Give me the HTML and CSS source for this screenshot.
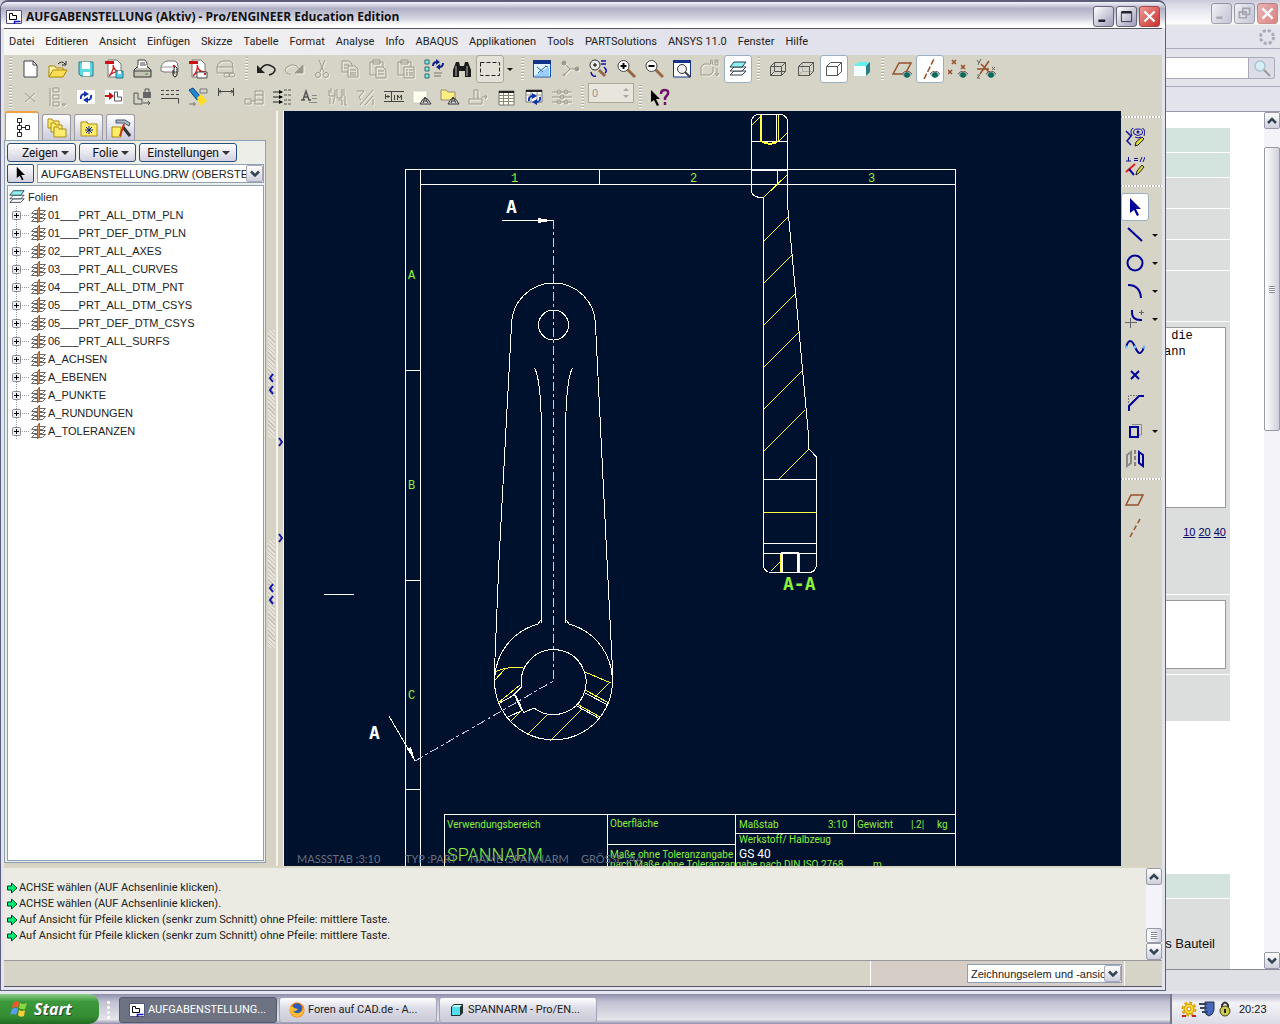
FILE: index.html
```
<!DOCTYPE html>
<html lang="de">
<head>
<meta charset="utf-8">
<title>AUFGABENSTELLUNG (Aktiv) - Pro/ENGINEER Education Edition</title>
<link rel="stylesheet" href="styles.css">
</head>
<body>
<svg class="defs" aria-hidden="true">
  <symbol id="eye" viewBox="0 0 10 7"><path d="M0 4Q5-3 10 4Q5 9 0 4z" fill="#9ab"/><circle cx="5" cy="4" r="2.8" fill="#086b55"/><path d="M0 3Q5-3 10 3" fill="none" stroke="#754"/></symbol>
  <symbol id="layer" viewBox="0 0 18 18"><path d="M1.500 7.500l3-3h11l-3 3zM1.500 11.500l3-3h11l-3 3zM1.500 15.500l3-3h11l-3 3z" fill="#fff" stroke="#666"/><path d="M7.500 4l2-3v13l-2 3z" fill="#d89a62" stroke="#94623a"/></symbol>
  <symbol id="layers" viewBox="0 0 20 20"><path d="M2 16l4-4h12l-4 4z" fill="#fff" stroke="#345"/><path d="M2 12l4-4h12l-4 4z" fill="#fff" stroke="#345"/><path d="M2 8l4-5h12l-4 5z" fill="#8ff0f0" stroke="#245"/></symbol>
  <symbol id="go" viewBox="0 0 12 12"><path d="M1 4h4V1l5.500 5L5 11V8H1z" fill="#0e7" stroke="#042"/></symbol>
  <symbol id="down" viewBox="0 0 10 8"><path d="M1 1.500l4 4 4-4" fill="none" stroke="#345" stroke-width="2.500"/></symbol>
  <symbol id="up" viewBox="0 0 10 8"><path d="M1 6l4-4 4 4" fill="none" stroke="#345" stroke-width="2.500"/></symbol>
  <symbol id="drw" viewBox="0 0 16 16"><path d="M.5 1.500h15v13H.5z" fill="#fff" stroke="#557"/><path d="M3.500 4.500h3v2h4v4h-7z" fill="none" stroke="#000"/><path d="M8.500 15v-2.500h6" fill="none" stroke="#11c" stroke-width="1.500"/></symbol>
  <symbol id="arrow" viewBox="0 0 20 20"><path d="M5 1v15l4-3 3 6 2-1-3-6h5z"/></symbol>
  <symbol id="pdf" viewBox="0 0 20 20"><path d="M4 1h9l4 4v13H4z" fill="#fff" stroke="#777"/><path d="M1 2h9v3H1z" fill="#c11"/><path d="M5 17C9 13 10 8 9 6c1 5 4 7 8 7-4-1-9 1-12 4z" fill="none" stroke="#c22" stroke-width="1.300"/></symbol>
</svg>
<div class="desktop">
  <div class="screen">
    <section class="browser" aria-label="Browser">
      <header class="btitle">
        <button class="wbtn" aria-label="Minimieren"><svg viewBox="0 0 20 20"><path d="M4 15h7" stroke="#778" stroke-width="3"/></svg></button>
        <button class="wbtn" aria-label="Wiederherstellen"><svg viewBox="0 0 20 20"><path d="M8 4h8v7H8zM4 8h8v7H4z" fill="#dcdce8" stroke="#778" stroke-width="2"/></svg></button>
        <button class="wbtn close" aria-label="Schließen"><svg viewBox="0 0 20 20"><path d="M4 4l12 12M16 4L4 16" stroke="#fff" stroke-width="3"/></svg></button>
      </header>
      <div class="bmenu"><svg width="18" height="18" viewBox="0 0 18 18"><circle cx="9" cy="9" r="6.500" fill="none" stroke="#aab" stroke-width="3" stroke-dasharray="3.100 2"/></svg></div>
      <div class="bnav"><input type="text" aria-label="Suche"><button aria-label="Suchen"><svg width="18" height="18" viewBox="0 0 18 18"><circle cx="7" cy="7" r="5" fill="#d6eef4" stroke="#aac4d0" stroke-width="1.500"/><path d="M11 11l6 6" stroke="#999" stroke-width="2"/></svg></button></div>
      <div class="bmarks"></div>
      <div class="bbody">
        <main class="page">
          <div class="cell green h24"></div><div class="cell green h24"></div>
          <div class="cell h30"></div><div class="cell h30"></div><div class="cell h30"></div><div class="cell h50"></div>
          <div class="cell first"><textarea readonly aria-label="Beitrag"> die
ann</textarea><p class="sizes"><a href="#a">10</a> <a href="#b">20</a> <a href="#c">40</a></p></div>
          <div class="cell second"><textarea readonly aria-label="Signatur"></textarea></div>
          <div class="cell h46"></div>
          <div class="cell green h24 later"></div>
          <div class="cell last">s Bauteil</div>
        </main>
        <div class="scroll"><button aria-label="Nach oben"><svg><use href="#up"/></svg></button><div class="track"><div class="thumb"><i></i></div></div><button aria-label="Nach unten"><svg><use href="#down"/></svg></button></div>
      </div>
      <footer class="bstatus"></footer>
    </section>

    <section class="cad" aria-label="Pro/ENGINEER">
      <header class="title">
        <svg width="16" height="16"><use href="#drw"/></svg>
        <h1>AUFGABENSTELLUNG (Aktiv) - Pro/ENGINEER Education Edition</h1>
        <button class="wbtn" aria-label="Minimieren"><svg viewBox="0 0 20 20"><path d="M4 15h8" stroke="#223" stroke-width="3"/></svg></button>
        <button class="wbtn" aria-label="Maximieren"><svg viewBox="0 0 20 20"><path d="M4 5h12v11H4z" fill="none" stroke="#223"/><path d="M4 5h12" stroke="#223" stroke-width="3"/></svg></button>
        <button class="wbtn close" aria-label="Schließen"><svg viewBox="0 0 20 20"><path d="M4 4l12 12M16 4L4 16" stroke="#fff" stroke-width="2.500"/></svg></button>
      </header>
      <div class="client">
      <nav class="menu"><a href="#m1">Datei</a><a href="#m2">Editieren</a><a href="#m3">Ansicht</a><a href="#m4">Einfügen</a><a href="#m5">Skizze</a><a href="#m6">Tabelle</a><a href="#m7">Format</a><a href="#m8">Analyse</a><a href="#m9">Info</a><a href="#m10">ABAQUS</a><a href="#m11">Applikationen</a><a href="#m12">Tools</a><a href="#m13">PARTSolutions</a><a href="#m14">ANSYS 11.0</a><a href="#m15">Fenster</a><a href="#m16">Hilfe</a></nav>

      <div class="tools">
        <i class="grip"></i>
        <button aria-label="Neu"><svg viewBox="0 0 20 20"><path d="M4 2h9l4 4v12H4z" fill="#fff" stroke="#445"/><path d="M13 2v4h4" fill="none" stroke="#445"/></svg></button>
        <button aria-label="Öffnen"><svg viewBox="0 0 20 20"><path d="M1 18V7h6l1 2h7v3" fill="#fff3a0" stroke="#a80"/><path d="M1 18l4-7h14l-4 7z" fill="#fd5" stroke="#a80"/><path d="M10 5q4-4 7 0M18 2v4h-4" fill="none" stroke="#222"/></svg></button>
        <button aria-label="Speichern"><svg viewBox="0 0 20 20"><path d="M3 3h14v14H5l-2-2z" fill="#5ddbe0" stroke="#287b88"/><path d="M6 3h8v7H6zM7 13h7v4H7z" fill="#fff"/></svg></button>
        <button aria-label="PDF speichern"><svg viewBox="0 0 20 20"><use href="#pdf"/><path d="M12 12h7v7h-7z" fill="#5ce" stroke="#278"/><path d="M14 12h3v3h-3z" fill="#fff"/></svg></button>
        <button aria-label="Drucken"><svg viewBox="0 0 20 20"><path d="M6 10V1h7l2 3v6" fill="#fff" stroke="#444"/><path d="M2 11l3-3h11l3 3v7H2z" fill="#c4c2b4" stroke="#333"/><path d="M6 9h9V6H6z" fill="#fff"/><path d="M8 4h5M8 6h6M2 12h17" stroke="#444"/><path d="M13 15h3" stroke="#2a2"/></svg></button>
        <button aria-label="Senden"><svg viewBox="0 0 20 20"><path d="M1 8q2-6 7-6h7q3 1 3 6v5H4l-3-1z" fill="#fff" stroke="#777"/><path d="M1 8h14" stroke="#999"/><path d="M13 11v5q2 4 4 0V9q-2-3-3 0v6" fill="none" stroke="#222"/><path d="M13 7h2" stroke="#c22" stroke-width="2"/></svg></button>
        <button aria-label="PDF senden"><svg viewBox="0 0 20 20"><use href="#pdf"/><path d="M9 13h10v6H9z" fill="#fff" stroke="#444"/><path d="M16 15h2" stroke="#c22" stroke-width="2"/></svg></button>
        <button class="off" aria-label="Verknüpfung"><svg viewBox="0 0 20 20"><path d="M1 8q2-6 7-6h6q3 1 3 6v6H1zM1 8h16"/><rect x="8" y="14" width="6" height="4" rx="2"/><rect x="13" y="14" width="6" height="4" rx="2"/></svg></button>
        <i class="grip"></i>
        <button aria-label="Rückgängig"><svg viewBox="0 0 20 20"><path d="M4 11q4-6 9-5 6 2 6 5-1 4-6 5" fill="none" stroke="#222" stroke-width="1.500"/><path d="M1 6v8h8z" fill="#222"/></svg></button>
        <button class="off" aria-label="Wiederherstellen"><svg viewBox="0 0 20 20"><path d="M16 11Q12 5 7 6 1 8 1 11q1 4 6 5"/><path d="M19 6v8h-8z" class="solid"/></svg></button>
        <button class="off" aria-label="Ausschneiden"><svg viewBox="0 0 20 20"><path d="M7 1l5 12M13 1L8 13"/><circle cx="6" cy="16" r="2.500"/><circle cx="14" cy="16" r="2.500"/></svg></button>
        <button class="off" aria-label="Kopieren"><svg viewBox="0 0 20 20"><path d="M8 13H2V2h7l3 3v2M4 6h5M4 9h3"/><path d="M8 7h7l3 3v8H8zM10 11h6M10 14h6M10 16h6"/></svg></button>
        <button class="off" aria-label="Einfügen"><svg viewBox="0 0 20 20"><path d="M8 16H2V3h13v5M5 1h7v4H5z"/><path d="M8 8h7l3 3v8H8zM10 12h6M10 15h6"/></svg></button>
        <button class="off" aria-label="Inhalte einfügen"><svg viewBox="0 0 20 20"><path d="M8 16H2V3h13v5M5 1h7v4H5z"/><path d="M8 8h10v11H8zM10 11h2M10 14h2M10 16h2M13 11h4M13 14h4M13 16h4"/></svg></button>
        <button aria-label="Regenerieren"><svg viewBox="0 0 20 20"><path d="M1 1h4v4H1zM1 8h4v4H1zM1 15h4v4H1z" fill="#7ee" stroke="#366"/><path d="M9 7q0-4 4-4M19 4q0 4-4 4" fill="none" stroke="#128" stroke-width="2"/><path d="M12 0l4 3-4 3zM16 5l-4 3 4 3z" fill="#128"/><path d="M10 14h8M10 17h7" stroke="#777"/></svg></button>
        <button aria-label="Suchen"><svg viewBox="0 0 20 20"><path d="M1 11l3-8h3l1 4h4l1-4h3l3 8v7h-6v-6H7v6H1z" fill="#1a1a1a"/><path d="M4 7v10M15 7v10" stroke="#bbb"/></svg></button>
        <button class="pressed" aria-label="Auswahlrahmen"><svg viewBox="0 0 20 20"><path d="M.5 3.500h19v13H.5z" fill="none" stroke="#222" stroke-dasharray="4 2"/></svg></button>
        <button class="drop" aria-label="Auswahloptionen"></button>
        <i class="grip"></i>
        <button aria-label="Neu zeichnen"><svg viewBox="0 0 20 20"><path d="M1.500 2h17v16h-17z" fill="#dff2ff" stroke="#15a"/><path d="M1 1h18v4H1z" fill="#138"/><path d="M2 17L17 8v9z" fill="#9cf"/><path d="M6 14l8-7M5 8l6 5M13 7l3 1" stroke="#26a" fill="none"/></svg></button>
        <button class="off" aria-label="Drehzentrum"><svg viewBox="0 0 20 20"><path d="M4 4l6 6h7M10 10l-6 6"/><circle cx="4" cy="4" r="2" class="solid"/><circle cx="17" cy="10" r="2" class="solid"/><circle cx="4" cy="16" r="1"/></svg></button>
        <button aria-label="Orientieren"><svg viewBox="0 0 20 20"><path d="M11 11l6 6" stroke="#964" stroke-width="3"/><circle cx="7" cy="6" r="5" fill="#eee" stroke="#333"/><path d="M7 4v4M5 6h4" stroke="#000"/><path d="M13 2h5M13 5h5M16 8q4 4 1 6M3 13q1 5 5 4" fill="none" stroke="#11a" stroke-width="1.500"/></svg></button>
        <button aria-label="Vergrößern"><svg viewBox="0 0 20 20"><path d="M11 10l8 8" stroke="#964" stroke-width="3"/><circle cx="7.500" cy="7" r="5.500" fill="#fff" stroke="#444"/><path d="M7.500 4v6M4.500 7h6" stroke="#000" stroke-width="2"/></svg></button>
        <button aria-label="Verkleinern"><svg viewBox="0 0 20 20"><path d="M11 10l8 8" stroke="#964" stroke-width="3"/><circle cx="7.500" cy="7" r="5.500" fill="#fff" stroke="#444"/><path d="M4.500 7h6" stroke="#000" stroke-width="2"/></svg></button>
        <button aria-label="Einpassen"><svg viewBox="0 0 20 20"><path d="M1.500 2h17v16h-17z" fill="#fff" stroke="#138"/><path d="M1 1h18v3H1z" fill="#138"/><circle cx="10" cy="10" r="4.500" fill="#eee" stroke="#333"/><path d="M13 13l5 5" stroke="#444" stroke-width="2"/></svg></button>
        <button class="off" aria-label="Ansichten"><svg viewBox="0 0 20 20"><path d="M9 5H4L1 8v8h9l3-3V8M10 6l1-5h1l1 5M11 4h2M15 1v5h3V1zM15 3h3M17 9v7m-2-2l2 3 2-3"/></svg></button>
        <button class="on" aria-label="Folien"><svg viewBox="0 0 20 20"><use href="#layers"/></svg></button>
        <i class="grip"></i>
        <button aria-label="Drahtmodell"><svg class="cube" viewBox="0 0 20 20"><path d="M2.500 7.500h11v9h-11zM6.500 3.500h11v9h-11zM2.500 7.500l4-4M13.500 7.500l4-4M2.500 16.500l4-4M13.500 16.500l4-4"/></svg></button>
        <button aria-label="Verdeckte Kante"><svg class="cube" viewBox="0 0 20 20"><path d="M6.500 3.500v9h11M6.500 12.500l-4 4" stroke="#aaa"/><path d="M2.500 7.500h11v9h-11zM2.500 7.500l4-4h11v9l-4 4M13.500 7.500l4-4"/></svg></button>
        <button class="on" aria-label="Keine verdeckten"><svg class="cube" viewBox="0 0 20 20"><path d="M2.500 7.500h11v9h-11zM2.500 7.500l4-4h11v9l-4 4M13.500 7.500l4-4"/></svg></button>
        <button aria-label="Schattiert"><svg viewBox="0 0 20 20"><path d="M2 7l4-4h12l-4 4z" fill="#6ee"/><path d="M2 7h12v10H2z" fill="#f2ffff"/><path d="M14 7l4-4v10l-4 4z" fill="#277e84"/></svg></button>
        <i class="grip"></i>
        <button class="brown" aria-label="Bezugsebenen"><svg viewBox="0 0 20 20"><path d="M1 15L7 4h12l-6 11z"/><use href="#eye" x="10" y="12" width="10" height="7"/></svg></button>
        <button class="on brown" aria-label="Bezugsachsen"><svg viewBox="0 0 20 20"><path d="M4 20L14 0" stroke-dasharray="6 2"/><use href="#eye" x="10" y="12" width="10" height="7"/></svg></button>
        <button class="brown" aria-label="Bezugspunkte"><svg viewBox="0 0 20 20"><path d="M4 1l4 4M8 1L4 5M13 6l4 4M17 6l-4 4M0 11l4 4M4 11l-4 4"/><use href="#eye" x="10" y="12" width="10" height="7"/></svg></button>
        <button class="brown" aria-label="Koordinatensysteme"><svg viewBox="0 0 20 20"><path d="M1 10h12M4 15l9-13M5 5l9 9"/><path d="M1 1l2 3M5 0L2 6M16 8l3 3M19 8l-3 3M1 16h3l-3 3h3" stroke="#665"/><use href="#eye" x="10" y="12" width="10" height="7"/></svg></button>
      </div>

      <div class="tools">
        <i class="grip"></i>
        <button class="off" aria-label="Löschen"><svg viewBox="0 0 20 20"><path d="M5 6l10 9M15 6L5 15"/></svg></button>
        <button class="off" aria-label="Ausrichten"><svg viewBox="0 0 20 20"><path d="M5 1h6v4H5zM5 8h6v4H5zM5 15h6v4H5zM2 1v18M14 17h4l-2 2z"/></svg></button>
        <button aria-label="Blatt aktualisieren"><svg viewBox="0 0 20 20"><path d="M1 3h18v14H1z" fill="#fff"/><path d="M5 12q-1-5 4-5M15 8q1 5-4 5" fill="none" stroke="#13a" stroke-width="2"/><path d="M8 4l5 3-5 3zM12 10l-5 3 5 3z" fill="#13a"/></svg></button>
        <button aria-label="Ansicht einfügen"><svg viewBox="0 0 20 20"><path d="M1 3h18v14H1z" fill="#fff"/><path d="M1 9h6" stroke="#c11" stroke-width="2"/><path d="M5 5l5 4-5 4z" fill="#c11"/><path d="M10.500 5v9h7v-4h-4V5z" fill="none" stroke="#555"/></svg></button>
        <button aria-label="Bewegung sperren"><svg viewBox="0 0 20 20"><path d="M2 6v11h8v-5H6V6zM11 16h7m-2-2l2 2-2 2M13 5V2h4v3" fill="none" stroke="#555"/><path d="M11 5h8v6h-8z" fill="#666"/></svg></button>
        <button aria-label="Linienart"><svg viewBox="0 0 20 20"><path d="M1 3.500h18M1 7.500h18" stroke="#444" stroke-dasharray="3 2"/><path d="M1 11.500h17.500v5" fill="none" stroke="#444"/></svg></button>
        <button aria-label="Zeigen und wegnehmen"><svg viewBox="0 0 20 20"><path d="M1 3l4-2 8 9-4 3z" fill="#28c" stroke="#148"/><path d="M9 11l4-4 6 7-7 5z" fill="#fd2"/><path d="M12 2h7v4h-7zM1 17h7m-2-2v4" fill="none" stroke="#777"/></svg></button>
        <button aria-label="Bemaßung"><svg viewBox="0 0 20 20"><path d="M2.500 1v8M17.500 1v8M2 4.500h16M5 3L3 4.500l2 2M15 3l2 1.500-2 2" fill="none" stroke="#444"/></svg></button>
        <button class="off" aria-label="Referenz"><svg viewBox="0 0 20 20"><path d="M1 12h6v5H1zM11 4h8v13h-8zM11 8h8M11 13h8M7 14h4"/></svg></button>
        <button aria-label="Bemaßungen aufräumen"><svg viewBox="0 0 20 20"><path d="M1 5h9M1 10h9M1 15h9" stroke="#222"/><path d="M7 3l4 2-4 2zM7 8l4 2-4 2zM7 13l4 2-4 2z"/><path d="M12 3h8M12 8h8M12 13h8M12 17h8" stroke="#555" stroke-dasharray="3 1"/></svg></button>
        <button aria-label="Notiz"><svg viewBox="0 0 20 20"><path d="M3 13L6 4l3 9M4 10h4M1 13h4M8 13h3" fill="none" stroke="#555" stroke-width="1.500"/><path d="M12 8.500h5M12 11.500h5M9 15.500h8" stroke="#888"/></svg></button>
        <button class="off" aria-label="Toleranz"><svg viewBox="0 0 20 20"><path d="M1 3v6h6V3M3 1v5M9 2v9h5V2M16 2v7M2 11v6M7 9l-2 8M10 13h4v5M17 9v9h2"/></svg></button>
        <button class="off" aria-label="Oberflächengüte"><svg viewBox="0 0 20 20"><path d="M1 4h7L3 10l2 3M4 18L17 3M17 12v6M9 18l8-9"/></svg></button>
        <button aria-label="Geometrische Toleranz"><svg viewBox="0 0 20 20"><path d="M0 4.500h20M0 14.500h20M7.500 5v10M1.500 7v5M2 9.500h4M4 8v3M10.500 8v5M13.500 13V8l2 3 2-3v5" fill="none" stroke="#444"/></svg></button>
        <button aria-label="Symbol"><svg viewBox="0 0 20 20"><path d="M1 4h14v12H1z" fill="#ffffed" stroke="#ccc"/><path d="M8 17q5-12 11 0zM11 16l2-6 3 6M12 14h3" fill="#ddd" stroke="#333"/></svg></button>
        <button aria-label="Symbolpalette"><svg viewBox="0 0 20 20"><path d="M1 13V3h5l2 2h7v8z" fill="#ffef83" stroke="#987"/><path d="M8 17q5-12 11 0zM11 16l2-6 3 6M12 14h3" fill="#ddd" stroke="#333"/></svg></button>
        <button class="off" aria-label="Verschieben"><svg viewBox="0 0 20 20"><path d="M1 12h13v5H1zM6 12V3h4v9M14 10h5m-2-2l2 2-2 2"/></svg></button>
        <button aria-label="Tabelle"><svg viewBox="0 0 20 20"><path d="M3 4h15v14H3z" fill="#fffff0" stroke="#777"/><path d="M3 8.500h15M3 11.500h15M3 14.500h15M7.500 4v14M12.500 4v14" stroke="#887"/><path d="M3 5h15" stroke="#222" stroke-width="2"/></svg></button>
        <button aria-label="Tabelle aktualisieren"><svg viewBox="0 0 20 20"><path d="M2 3h16v12H2z" fill="#fff" stroke="#777"/><path d="M2 4h16" stroke="#222" stroke-width="2"/><path d="M2 8h16M7 5v10M13 5v10" stroke="#998"/><path d="M5 14q-1-5 4-5M16 10q1 5-4 5" fill="none" stroke="#13a" stroke-width="2"/><path d="M8 6l5 3-5 3zM13 12l-5 3 5 3z" fill="#13a"/></svg></button>
        <button class="off" aria-label="Raster"><svg viewBox="0 0 20 20"><path d="M0 5h20M0 10h20M0 15h20"/><circle cx="7" cy="5" r="2"/><circle cx="14" cy="5" r="2"/><circle cx="7" cy="15" r="2"/><circle cx="14" cy="15" r="2"/><circle cx="10" cy="10" r="2"/></svg></button>
        <i class="grip"></i>
        <span class="num"><input type="text" value="0" disabled aria-label="Wert"><svg width="14" height="16" viewBox="0 0 14 16"><path d="M4 6h6L7 3zM4 10h6l-3 3z" fill="#aaa89a"/></svg></span>
        <i class="grip"></i>
        <button aria-label="Kontexthilfe"><svg viewBox="0 0 20 20"><path d="M1 3v12l3-2 3 6 2-1-3-6h4z"/><path d="M11 7q0-4 4-4 4 0 3 4l-3 4v2M15 15v3" fill="none" stroke="#70106a" stroke-width="2.500"/></svg></button>
      </div>

      <div class="work">
        <aside class="side">
          <div class="tabs">
            <button class="cur" aria-label="Modellbaum"><svg viewBox="0 0 20 20"><path d="M5.500 1.500h4v4h-4zM5.500 8.500h4v4h-4zM5.500 15.500h4v4h-4zM13.500 8.500h4v4h-4zM7.500 6v2M7.500 13v2M10 10.500h3" fill="#fff" stroke="#222"/></svg></button>
            <button aria-label="Ordner"><svg viewBox="0 0 20 20"><path d="M1 10V1h4l1 2h6v7z" fill="#ffec6a" stroke="#a98b18"/><path d="M4 14V5h4l1 2h6v7z" fill="#ffec6a" stroke="#a98b18"/><path d="M7 19V9h4l1 2h7v8z" fill="#ffec6a" stroke="#a98b18"/></svg></button>
            <button aria-label="Favoriten"><svg viewBox="0 0 20 20"><path d="M2 18V4h6l1 2h9v12z" fill="#ffec6a" stroke="#a98b18"/><path d="M10 8v8M6 12h8M7 9l6 6M13 9l-6 6" stroke="#128"/></svg></button>
            <button aria-label="Verbindungen"><svg viewBox="0 0 20 20"><path d="M1 9h9v10H1z" fill="#fe6" stroke="#a81"/><path d="M12 9l7 9" stroke="#333" stroke-width="3"/><path d="M13 6L9 18" stroke="#c31" stroke-width="2"/><path d="M5 2h9l5 3-1 3-5-3H5z" fill="#abc" stroke="#456"/></svg></button>
          </div>
          <div class="panel">
            <div class="pbtns"><button class="zeigen">Zeigen</button><button class="folie">Folie</button><button class="einst">Einstellungen</button></div>
            <div class="pick"><button aria-label="Auswählen"><svg width="15" height="15"><use href="#arrow"/></svg></button>
              <span class="combo"><select aria-label="Modell"><option>AUFGABENSTELLUNG.DRW (OBERSTES)</option></select><span class="cbtn"><svg><use href="#down"/></svg></span></span></div>
            <div class="tree">
              <p><svg width="18" height="18"><use href="#layers"/></svg>Folien</p>
              <ul>
                <li>01___PRT_ALL_DTM_PLN</li><li>01___PRT_DEF_DTM_PLN</li><li>02___PRT_ALL_AXES</li><li>03___PRT_ALL_CURVES</li><li>04___PRT_ALL_DTM_PNT</li><li>05___PRT_ALL_DTM_CSYS</li><li>05___PRT_DEF_DTM_CSYS</li><li>06___PRT_ALL_SURFS</li><li>A_ACHSEN</li><li>A_EBENEN</li><li>A_PUNKTE</li><li>A_RUNDUNGEN</li><li>A_TOLERANZEN</li>
              </ul>
            </div>
          </div>
        </aside>
        <div class="sash">
          <div class="strip"><svg width="7" height="108" viewBox="0 0 7 108"><path d="M5 44L2 48l3 4M5 56l-3 4 3 4" fill="none" stroke="#11a" stroke-width="2"/></svg><svg width="7" height="108" viewBox="0 0 7 108"><path d="M5 44L2 48l3 4M5 56l-3 4 3 4" fill="none" stroke="#11a" stroke-width="2"/></svg></div>
          <div class="edge"><svg width="5" height="110" viewBox="0 0 5 110"><path d="M1 4l3 4-3 4M1 100l3 4-3 4" fill="none" stroke="#11a" stroke-width="2"/></svg></div>
        </div>
        <div class="canvas">
          <svg class="drawing" viewBox="284 111 837 755" preserveAspectRatio="xMinYMin slice" role="img" aria-label="Zeichnung Spannarm">
            <g class="w">
              <path d="M405.500 866V169.500H955.500V866M420.500 169.500V866M420.500 184.500H955.500M599.500 170V184M777.500 170V184M405.500 370.500h15M405.500 580.500h15M405.500 789.500h15"/>
              <path d="M444.500 866V814.500H955.500M607.500 814V866M735.500 814V866M854.500 814V833M735.500 833.500H955.500M607.500 844.500H735.500"/>
              <path d="M494.500 682V670L499 560 511.500 325A42 42 0 0 1 595.500 325L607 560 612.500 670V682"/>
              <circle cx="553.500" cy="325" r="15"/>
              <path d="M534.500 368Q541.500 380 541.500 440V623M572.500 368Q565.500 380 565.500 440V623"/>
              <path d="M541.500 619L538 624A59 59 0 1 0 569 624L565.500 619"/>
              <path d="M521.500 687A32.500 32.500 0 1 1 534 708L524 712.500 514 694.500z"/>
              <path d="M498 704L514 695M506 718L523 710M585 693L608 705M577 706L600 719"/>
              <path d="M515 695L522 710" stroke-width="2"/>
              <path d="M502 220.500H553M389 716L415 761M324 594.500H354"/>
              <path d="M538 218l5 1h4v3h-4l-5 1zM407 749l4-2 4 14z" fill="#fff"/>
              <path d="M751.500 190V122.500Q751.500 114.500 759.500 114.500H779.500Q787.500 114.500 787.500 122.500V204L808 430 809 449 816.500 457V564Q816.500 572.500 808 572.500H772Q763.500 572.500 763.500 564V197.500Q751.500 198 751.500 190M751.500 141.500H787.500M751.500 170.500H787.500M776.500 115V141"/>
              <path d="M763.500 479.500H816.500M763.500 543.500H816.500M763.500 553.500H816.500"/>
              <path d="M782 572V553H798V572" stroke-width="2"/>
            </g>
            <path class="axis" d="M553.500 220V681L415 761"/>
            <g class="y">
              <path d="M495 672Q504 667 523 667M495 680L505 669M498 703L520 685M511 721L522 710M527 735L547 715M550 741L582 709M585 672L611 683M595 697L609 683M585 690L609 703M577 704L600 717"/>
              <path d="M752 125L760 117M779 141L787 133M778.500 115V141M764 197L787 175M764 241L788 217M764 283L792 255M764 325L795 294M764 367L799 332M764 409L802 371M764 451L805 410M779 479L809 449M763.500 512.500H816.500M771 571L781 561M780.500 554V572M799.500 554V572"/>
              <path d="M761 115V141Q769 146 777 142" stroke-width="2"/>
            </g>
            <g class="lbl">
              <text x="511" y="182" class="zone">1</text><text x="690" y="182" class="zone">2</text><text x="868" y="182" class="zone">3</text>
              <text x="408" y="279" class="zone">A</text><text x="408" y="489" class="zone">B</text><text x="408" y="699" class="zone">C</text>
              <text x="783" y="590" class="sec lime">A-A</text>
              <text x="506" y="213" class="sec white">A</text><text x="369" y="739" class="sec white">A</text>
              <text x="447" y="828">Verwendungsbereich</text><text x="610" y="827">Oberfläche</text>
              <text x="739" y="828">Maßstab</text><text x="828" y="828">3:10</text><text x="857" y="828">Gewicht</text><text x="911" y="828">|.2|</text><text x="937" y="828">kg</text>
              <text x="739" y="843">Werkstoff/ Halbzeug</text><text x="739" y="858" class="white gs">GS 40</text>
              <text x="610" y="858">Maße ohne Toleranzangabe</text>
              <text x="610" y="868">nach Maße ohne Toleranzangabe nach DIN ISO 2768</text><text x="873" y="868">m</text>
              <text x="447" y="861" class="big">SPANNARM</text>
            </g>
            <g class="meta"><text x="297" y="863">MASSSTAB :3:10</text><text x="405" y="863">TYP :PART</text><text x="470" y="863">NAME :SPANNARM</text><text x="581" y="863">GRÖSSE :A4</text></g>
          </svg>
        </div>
        <div class="vtools">
          <i class="hgrip"></i>
          <div><button aria-label="Skizzenkette"><svg viewBox="0 0 20 20"><path d="M1 3l5 5-4 5 4 4" fill="none" stroke="#119" stroke-width="1.500"/><circle cx="13" cy="4" r="1.500" fill="#119"/><path d="M9 6q-2-5 4-5t4 5q-4 3-8 0M7 8Q3-1 13-1q9 0 6 9M10 9q3 2 6 0" fill="none" stroke="#119"/><path d="M10 18l1-4 6-5 2 2-6 6z" fill="#dd3" stroke="#222"/></svg></button></div>
          <div><button aria-label="Parametrische Skizze"><svg viewBox="0 0 20 20"><path d="M1 5h5M3.500 1v4M9 2.500h4M9 4.500h4M15 6l2-5M18 6l2-5" stroke="#119"/><path d="M1 16L10 8" stroke="#d22" stroke-width="2"/><path d="M4 13l5 6" stroke="#119" stroke-width="2"/><path d="M11 19l1-4 5-6 2 2-5 6z" fill="#dd3" stroke="#222"/></svg></button></div>
          <i class="hgrip"></i>
          <div><button class="on" aria-label="Auswählen"><svg viewBox="0 0 20 20" fill="#009"><use href="#arrow"/></svg></button></div>
          <div class="blue"><button aria-label="Linie"><svg viewBox="0 0 20 20"><path d="M3 3l14 13"/></svg></button><button class="drop" aria-label="Linienoptionen"></button></div>
          <div class="blue"><button aria-label="Kreis"><svg viewBox="0 0 20 20"><circle cx="10" cy="10" r="7.500"/></svg></button><button class="drop" aria-label="Kreisoptionen"></button></div>
          <div class="blue"><button aria-label="Bogen"><svg viewBox="0 0 20 20"><path d="M3 4Q15 4 16 17"/></svg></button><button class="drop" aria-label="Bogenoptionen"></button></div>
          <div class="blue"><button aria-label="Verrundung"><svg viewBox="0 0 20 20"><path d="M7 1q-1 11 10 10"/><path d="M0 13.500h12M5.500 9v10M14 3.500h5M16.500 1v5" stroke="#666" stroke-width="1"/></svg></button><button class="drop" aria-label="Verrundungsoptionen"></button></div>
          <div class="blue"><button aria-label="Spline"><svg viewBox="0 0 20 20"><path d="M1 10Q5-2 10 10t9 0"/><path d="M0 10h2M9 10h2M18 10h2" stroke="#6bf" stroke-width="3"/></svg></button></div>
          <div class="blue"><button aria-label="Punkt"><svg viewBox="0 0 20 20"><path d="M6 6l8 8M14 6l-8 8"/></svg></button></div>
          <div class="blue"><button aria-label="Fase"><svg viewBox="0 0 20 20"><path d="M4 18v-5L14 3h5"/><path d="M3.500 10V2.500H12" stroke="#777" stroke-width="1" stroke-dasharray="2 1"/></svg></button></div>
          <div class="blue"><button aria-label="Kante verwenden"><svg viewBox="0 0 20 20"><path d="M7 3.500h9.500V14H13" stroke="#888" stroke-width="1"/><path d="M5 6h8v10H5z"/></svg></button><button class="drop" aria-label="Kantenoptionen"></button></div>
          <div class="blue"><button aria-label="Spiegeln"><svg viewBox="0 0 20 20"><path d="M2 6l4-3v11l-4 3z" stroke="#888"/><path d="M10 1v18" stroke="#333" stroke-width="1" stroke-dasharray="4 2"/><path d="M14 3l4 3v11l-4-3z"/></svg></button></div>
          <i class="hgrip"></i>
          <div class="brown"><button aria-label="Ebene"><svg viewBox="0 0 20 20"><path d="M1 15L6 5h12l-5 10z"/></svg></button></div>
          <div class="brown"><button aria-label="Achse"><svg viewBox="0 0 20 20"><path d="M5 19L15 1" stroke-dasharray="5 3"/></svg></button></div>
        </div>
      </div>

      <div class="msgs">
        <ul><li><svg><use href="#go"/></svg>ACHSE wählen (AUF Achsenlinie klicken).</li><li><svg><use href="#go"/></svg>ACHSE wählen (AUF Achsenlinie klicken).</li><li><svg><use href="#go"/></svg>Auf Ansicht für Pfeile klicken (senkr zum Schnitt) ohne Pfeile: mittlere Taste.</li><li><svg><use href="#go"/></svg>Auf Ansicht für Pfeile klicken (senkr zum Schnitt) ohne Pfeile: mittlere Taste.</li></ul>
        <div class="scroll"><button aria-label="Nach oben"><svg><use href="#up"/></svg></button><div class="track end"><div class="thumb small"><i></i></div></div><button aria-label="Nach unten"><svg><use href="#down"/></svg></button></div>
      </div>
      <footer class="status"><div class="filter"><span class="combo"><select aria-label="Filter"><option>Zeichnungselem und -ansicht</option></select><span class="cbtn"><svg><use href="#down"/></svg></span></span></div><div class="corner"></div></footer>
      </div>
    </section>
  </div>

  <footer class="taskbar">
    <button class="start"><svg width="20" height="20" viewBox="0 0 20 20"><path d="M3 4q3-3 6-1L8 9Q5 7 2 9z" fill="#f4562b"/><path d="M10 4q3 2 7 0l-2 6q-3 1-6-1z" fill="#8bd83c"/><path d="M2 10q3-2 6 0l-2 6q-3-2-6 0z" fill="#5a9cf5"/><path d="M9 11q3 2 6 0l-1 6q-4 2-6-1z" fill="#fc3"/></svg>Start</button>
    <i class="tgrip"></i>
    <button class="task active"><svg width="16" height="16"><use href="#drw"/></svg>AUFGABENSTELLUNG...</button>
    <button class="task"><svg width="16" height="16" viewBox="0 0 16 16"><circle cx="8" cy="8" r="7.500" fill="#e66a10"/><circle cx="8" cy="6.500" r="5" fill="#2a5db8"/><path d="M1 5q3-2 4 1l4 1q-2 3-5 2 3 4 8 1 3-3 1-7 4 6 0 10-5 4-10 0Q0 10 1 5z" fill="#fb3"/></svg>Foren auf CAD.de - A...</button>
    <button class="task"><svg width="16" height="16" viewBox="0 0 16 16"><path d="M2 5l3-3h9v9l-3 3H2z" fill="#233"/><path d="M3 5h8v8H3z" fill="#5de"/><path d="M3 5l2-2h8l-2 2z" fill="#bff"/></svg>SPANNARM - Pro/EN...</button>
    <div class="tray">
      <svg width="16" height="16" viewBox="0 0 16 16"><circle cx="8" cy="8" r="5" fill="#fd3" stroke="#c80" stroke-width="1"/><circle cx="8" cy="8" r="6.500" fill="none" stroke="#da0" stroke-width="2" stroke-dasharray="3 2"/><circle cx="8" cy="8" r="2" fill="#fff" stroke="#c80"/><path d="M1 15h4M11 15h4" stroke="#c22" stroke-width="2"/></svg>
      <svg width="16" height="16" viewBox="0 0 16 16"><path d="M6 1h9v8q-1 5-5 6-4-1-4-5z" fill="#4868c0" stroke="#234"/><path d="M0 3h8M1 7h7M3 11h6" stroke="#346" stroke-width="2"/></svg>
      <svg width="16" height="16" viewBox="0 0 16 16"><path d="M5 8V4q3-5 6 0v4" fill="none" stroke="#333" stroke-width="2"/><circle cx="8" cy="10" r="5" fill="#cdc84e" stroke="#442"/><path d="M8 8v4" stroke="#222" stroke-width="2"/></svg>
      <time>20:23</time>
    </div>
  </footer>
</div>
<script src="tree.js"></script>
</body>
</html>
```
FILE: tree.js
```
// Give every layer row its expander box and layer icon.
document.querySelectorAll('.tree li').forEach(function (row) {
  row.insertAdjacentHTML('afterbegin', '<svg class="plus" viewBox="0 0 18 18"><path d="M4.500 0v18M10 9.500h8" stroke="#999" stroke-dasharray="1 1"/><rect x=".5" y="5.500" width="8" height="8" rx="1" fill="#eee" stroke="#889"/><path d="M2 9.500h5M4.500 7v5" stroke="#000"/></svg><svg class="lay"><use href="#layer"/></svg>');
});
```
FILE: styles.css
```
* { box-sizing: border-box; }
body { margin: 0; font: 11px/16px Roboto, "Liberation Sans", sans-serif; color: #222; }
button { padding: 0; border: 0; background: none; font: inherit; color: inherit; }
input, select, textarea { font: inherit; color: inherit; margin: 0; }
ul, p, h1 { margin: 0; padding: 0; list-style: none; }
.defs { display: none; }
.desktop { height: 100vh; display: flex; flex-direction: column; overflow: hidden; }
.screen { flex: 1; position: relative; min-height: 0; }

/* Browser window in the background */
.browser { position: absolute; inset: 0; display: flex; flex-direction: column; background: #e3e3ec; }
.btitle { height: 26px; flex: none; display: flex; justify-content: flex-end; align-items: center; gap: 2px; padding-right: 2px; background: linear-gradient(#c9c9d8, #dcdce8 20%, #fff 90%, #ddd); }
.btitle .wbtn { opacity: .6; }
.bmenu { height: 23px; flex: none; display: flex; justify-content: flex-end; align-items: center; padding-right: 4px; border-bottom: 1px solid #aab; }
.bnav { height: 38px; flex: none; display: flex; align-items: center; justify-content: flex-end; padding-right: 5px; border-bottom: 1px solid #aab; }
.bnav input { width: 200px; height: 22px; border: 1px solid #aab; background: #fff; }
.bnav button { width: 26px; height: 22px; border: 1px solid #aab; border-left: 0; background: #dcdce6; display: grid; place-items: center; border-radius: 0 3px 3px 0; }
.bmarks { height: 24px; flex: none; }
.bbody { flex: 1; min-height: 0; display: flex; justify-content: flex-end; background: #fff; border-top: 1px solid #99a; }
.page { width: 70px; margin-right: 34px; padding-top: 16px; display: flex; flex-direction: column; gap: 1px; overflow: hidden; }
.cell { background: #dcdddd; flex: none; }
.green { background: #d3e4de; }
.h24 { height: 24px; }
.h30 { height: 30px; }
.h50 { height: 50px; }
.h46 { height: 46px; }
.cell textarea { display: block; width: 66px; height: 181px; resize: none; overflow: hidden; white-space: pre; border: 1px solid #999; background: #fff; padding: 0 3px; font: 12px/16px "Liberation Mono", monospace; color: #000; }
.first { height: 272px; padding-top: 5px; }
.second { height: 79px; padding-top: 5px; }
.second textarea { height: 69px; }
.sizes { padding: 16px 4px 0 0; text-align: right; font-family: "Liberation Sans", sans-serif; white-space: nowrap; }
.sizes a { color: #006; }
.later { margin-top: 152px; }
.last { flex: 1; padding: 37px 15px 0 0; text-align: right; font-family: "Liberation Sans", sans-serif; font-size: 13px; color: #111; white-space: nowrap; }
.bstatus { height: 22px; flex: none; border-top: 1px solid #889; background: #dfdfe6; }

/* Scroll bars */
.scroll { width: 16px; flex: none; display: flex; flex-direction: column; background: #f3f3f9; }
.scroll button { height: 17px; flex: none; border: 1px solid #99a; border-radius: 2px; background: linear-gradient(#fff, #cfcfdc); display: grid; place-items: center; }
.scroll svg, .cbtn svg { width: 10px; height: 8px; }
.track { flex: 1; padding-top: 18px; display: flex; flex-direction: column; }
.track.end { padding: 0; justify-content: flex-end; }
.thumb { height: 284px; border: 1px solid #99a; border-radius: 2px; background: linear-gradient(90deg, #fff, #cfcfdc); display: grid; place-items: center; }
.thumb.small { height: 15px; }
.thumb i { width: 6px; height: 7px; background: repeating-linear-gradient(#889 0 1px, #fff 1px 2px); }

/* CAD window */
.cad { position: absolute; inset: 0 114px 0 0; display: flex; flex-direction: column; border: 1px solid #5d5d7c; border-top-width: 2px; border-radius: 8px 8px 0 0; background: #e4e4ee; overflow: hidden; }
.title { height: 26px; flex: none; display: flex; align-items: center; gap: 2px; padding: 3px 5px 0 5px; background: linear-gradient(#f4f4fa, #b0b0c6 25%, #d0d0de 60%, #fff 90%); }
.title h1 { flex: 1; padding-left: 2px; font: bold 12px/18px "Open Sans", sans-serif; color: #111; white-space: nowrap; overflow: hidden; }
.wbtn { width: 21px; height: 21px; border: 1px solid #667; border-radius: 3px; background: linear-gradient(135deg, #fff, #9d9dba); display: grid; place-items: center; }
.wbtn svg { width: 17px; height: 17px; }
.wbtn.close { background: linear-gradient(135deg, #ee9a92, #c8302c); border-color: #a44; }
.client { flex: 1; min-height: 0; margin: 0 3px 3px; display: flex; flex-direction: column; border-top: 1px solid #556; border-bottom: 1px solid #556; background: #d6d3c4; }
.menu { height: 26px; flex: none; display: flex; gap: 11px; align-items: center; padding: 0 0 0 5px; background: linear-gradient(90deg, #f7f7f5, #e2e2ec 60%); }
.menu a { color: #222; text-decoration: none; white-space: nowrap; }
.tools { height: 28px; flex: none; display: flex; align-items: center; background: #d6d4c6; }
.tools button { width: 28px; height: 28px; flex: none; display: grid; place-items: center; border: 1px solid transparent; border-radius: 3px; }
.tools button svg { width: 20px; height: 20px; }
.tools .on, .vtools .on { background: #fff; border-color: #9ab0c0; }
.tools .pressed { background: #e4e2d8; border-color: #aaa89a; }
.off path, .off circle, .off rect { stroke: #9a988c; fill: none; }
.off .solid { fill: #9a988c; }
.off svg { filter: drop-shadow(1px 1px 0 #f4f3ec); }
.cube { fill: none; stroke: #555; }
.brown path { fill: none; stroke: #96502c; stroke-width: 1.5; }
.brown path[stroke] { stroke: #665; stroke-width: 1; }
.tools button.drop, .vtools button.drop { width: 12px; border: 0; }
.drop::after { content: ""; border: 3px solid transparent; border-top-color: #111; border-bottom: 0; }
.grip { width: 12px; height: 24px; flex: none; display: flex; justify-content: center; }
.grip::before { content: ""; width: 3px; background: repeating-linear-gradient(#b0ae9e 0 1px, #fff 1px 2px, #d6d4c6 2px 3px); }
.num { width: 46px; height: 20px; margin-bottom: 8px; display: flex; align-items: center; border: 1px solid #aaa89a; background: #e8e6dc; }
.num input { width: 30px; min-width: 0; height: 18px; padding: 0 3px; border: 0; background: none; color: #999; }

.work { flex: 1; min-height: 0; display: flex; }
.side { width: 262px; flex: none; display: flex; flex-direction: column; min-height: 0; padding-bottom: 3px; font-family: "Liberation Sans", sans-serif; }
.tabs { height: 29px; flex: none; display: flex; align-items: flex-end; gap: 3px; padding-left: 1px; }
.tabs button { width: 29px; height: 26px; border: 1px solid #99a; border-bottom: 0; border-radius: 3px 3px 0 0; background: linear-gradient(#fff, #c9c9da); display: grid; place-items: center; }
.tabs svg { width: 20px; height: 20px; }
.tabs .cur { width: 34px; height: 29px; background: #fff; border-top: 2px solid #f0a040; }
.panel { flex: 1; min-height: 0; display: flex; flex-direction: column; gap: 2px; padding: 2px 1px 1px 2px; border: 1px solid #8ba0b4; background: #eeeee8; }
.pbtns { display: flex; gap: 3px; }
.pbtns button { height: 19px; border: 1px solid #2a5078; border-radius: 3px; background: linear-gradient(#fff, #d0d0e0); display: flex; align-items: center; justify-content: flex-end; gap: 3px; padding-right: 6px; font: 12px/16px Roboto, sans-serif; color: #111; }
.pbtns button::after { content: ""; border: 4px solid transparent; border-top-color: #333; border-bottom: 0; }
.zeigen { width: 69px; }
.folie { width: 57px; }
.einst { width: 98px; }
.pick { display: flex; gap: 3px; height: 19px; }
.pick button { width: 27px; border: 1px solid #2a5078; border-radius: 2px; background: linear-gradient(#fff, #d0d0e0); display: grid; place-items: center; }
.combo { flex: 1; min-width: 0; display: grid; grid-template-columns: 1fr 17px; border: 1px solid #8ba0b4; background: #fff; font-family: "Liberation Sans", sans-serif; }
.combo select { grid-area: 1 / 1 / 2 / 2; min-width: 0; width: 100%; appearance: none; border: 0; padding: 0 0 0 3px; background: none; text-overflow: clip; overflow: hidden; white-space: nowrap; }
.cbtn { grid-area: 1 / 2 / 2 / 3; border: 1px solid #aab; border-radius: 2px; background: linear-gradient(#fff, #cfcfdc); display: grid; place-items: center; }
.tree { flex: 1; min-height: 0; overflow: hidden; background: #fff; border: 1px solid #8ba0b4; padding-top: 2px; line-height: 18px; }
.tree p { display: flex; gap: 2px; height: 18px; }
.tree li { height: 18px; display: flex; padding-left: 4px; white-space: nowrap; }
.plus { width: 18px; height: 18px; flex: none; }
.lay { width: 18px; height: 18px; flex: none; }

.sash { width: 18px; flex: none; display: flex; justify-content: flex-end; }
.strip { width: 7px; margin-right: 1px; display: flex; flex-direction: column; align-items: center; justify-content: center; gap: 102px; }
.strip svg { flex: none; background: repeating-linear-gradient(45deg, #c4c2b6 0 1px, #e4e2d8 1px 3px); }
.edge { width: 8px; display: flex; align-items: center; border-left: 2px solid #f4f3ec; border-right: 1px solid #f4f3ec; }
.edge svg { flex: none; }
.canvas { flex: 1; min-width: 0; background: #00112e; overflow: hidden; }
.drawing { display: block; width: 100%; height: 100%; }
.w path, .w circle { fill: none; stroke: #fff; shape-rendering: crispEdges; }
.w path[fill] { fill: #fff; stroke: none; }
.y path { fill: none; stroke: #ffff40; shape-rendering: crispEdges; }
.axis { fill: none; stroke: #c4cede; stroke-dasharray: 9 3 3 3; shape-rendering: crispEdges; }
.lbl { font: 10px Roboto, sans-serif; fill: #8cf03c; }
.lbl .zone { font: 12px "Liberation Mono", monospace; }
.lbl .sec { font: bold 18px "DejaVu Sans Mono", monospace; }
.lbl .lime { fill: #8cf03c; }
.lbl .white { fill: #fff; }
.lbl .gs { font-size: 12px; }
.lbl .big { font-size: 18px; font-weight: 300; }
.meta { font: 11px Lato, sans-serif; fill: #68707c; }

.vtools { width: 41px; flex: none; background: #d6d4c6; }
.vtools div { display: flex; height: 28px; }
.vtools button { width: 28px; height: 28px; display: grid; place-items: center; border: 1px solid transparent; border-radius: 3px; }
.vtools svg { width: 20px; height: 20px; }
.blue svg { fill: none; stroke: #009; stroke-width: 2; }
.hgrip { display: block; height: 13px; padding: 5px 0; }
.hgrip::before { content: ""; display: block; height: 2px; background: repeating-linear-gradient(90deg, #aaa89a 0 1px, #fff 1px 3px); }

.msgs { height: 94px; flex: none; display: flex; border-top: 2px solid #d8d6c4; background: #ebeae3; }
.msgs ul { flex: 1; padding: 12px 0 0 2px; }
.msgs li { display: flex; align-items: center; height: 16px; }
.msgs li svg { width: 13px; height: 12px; }
.status { height: 26px; flex: none; display: flex; justify-content: flex-end; border-top: 1px solid #999; background: #d6d4c6; }
.filter { width: 254px; display: flex; padding: 3px 2px 3px 96px; border-left: 1px solid #fff; background: #d6cec6; }
.corner { width: 38px; border-left: 1px solid #fff; background: #d6d4c6; }

/* Task bar */
.taskbar { height: 33px; flex: none; display: flex; align-items: stretch; border-top: 3px solid #e6e6f0; background: linear-gradient(#8e8eac, #c0c0d2 25%, #e4e4ea 85%, #8e8eac); }
.start { width: 99px; display: flex; align-items: center; gap: 4px; padding-left: 10px; border-radius: 0 10px 10px 0; background: linear-gradient(#8fce8a, #3c9a3c 25%, #358c32 75%, #1f6b22); color: #fff; font: italic bold 16px/20px "Open Sans", sans-serif; text-shadow: 1px 1px 1px #243; }
.tgrip { width: 5px; margin: 6px 8px 4px 7px; background: radial-gradient(circle, #fff 1px, transparent 2px) 0 0 / 5px 5px; }
.task { width: 158px; height: 26px; margin: 3px 2px 0 0; display: flex; align-items: center; gap: 3px; padding-left: 9px; border: 1px solid #a4a4b8; border-radius: 3px; background: linear-gradient(#fff, #dedee8 40%, #c9c9d8); white-space: nowrap; }
.task.active { background: #6d7383; border-color: #555b6b; color: #fff; }
.tray { margin-left: auto; width: 110px; display: flex; align-items: center; gap: 2px; padding-left: 9px; border-left: 2px solid #778; background: linear-gradient(#b9b9cc, #f2f2f8 30%, #dcdce6); }
.tray time { padding-left: 4px; color: #111; font-family: "Liberation Sans", sans-serif; }
```
